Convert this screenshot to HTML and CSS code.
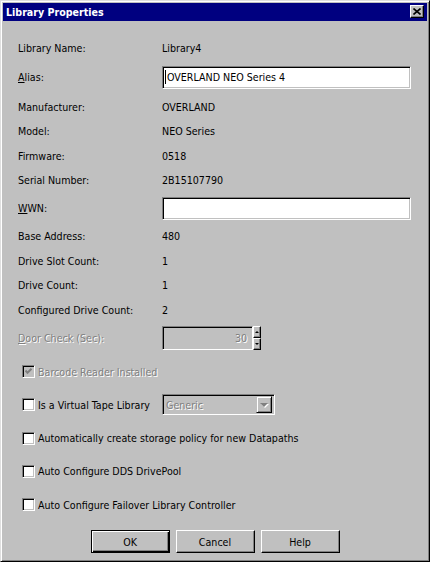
FILE: index.html
```html
<!DOCTYPE html>
<html lang="en">
<head>
    <meta charset="UTF-8">
    <title>Library Properties</title>
    <link rel="stylesheet" href="styles.css">
</head>
<body>
    <div class="window">
        <div class="titlebar">
            <span class="title">Library Properties</span>
            <button class="close" title="Close">
                <svg width="8" height="7" viewBox="0 0 8 7">
                    <path d="M0.5 0.5 L7.5 6.5 M7.5 0.5 L0.5 6.5" stroke="#000" stroke-width="1.6" fill="none"/>
                </svg>
            </button>
        </div>

        <div class="content">
            <div class="form">
                <div class="row">
                    <span class="label">Library Name:</span>
                    <span class="value">Library4</span>
                </div>
                <div class="row row-alias">
                    <span class="label"><u>A</u>lias:</span>
                    <div class="edit"><span class="caret"></span>OVERLAND NEO Series 4</div>
                </div>
                <div class="row">
                    <span class="label">Manufacturer:</span>
                    <span class="value">OVERLAND</span>
                </div>
                <div class="row">
                    <span class="label">Model:</span>
                    <span class="value">NEO Series</span>
                </div>
                <div class="row">
                    <span class="label">Firmware:</span>
                    <span class="value">0518</span>
                </div>
                <div class="row">
                    <span class="label">Serial Number:</span>
                    <span class="value">2B15107790</span>
                </div>
                <div class="row row-wwn">
                    <span class="label"><u>W</u>WN:</span>
                    <div class="edit"></div>
                </div>
                <div class="row">
                    <span class="label">Base Address:</span>
                    <span class="value">480</span>
                </div>
                <div class="row">
                    <span class="label">Drive Slot Count:</span>
                    <span class="value">1</span>
                </div>
                <div class="row">
                    <span class="label">Drive Count:</span>
                    <span class="value">1</span>
                </div>
                <div class="row">
                    <span class="label">Configured Drive Count:</span>
                    <span class="value">2</span>
                </div>
                <div class="row row-tall">
                    <span class="label disabled"><u>D</u>oor Check (Sec):</span>
                    <div class="edit edit-spin disabled">30</div>
                    <div class="spin">
                        <span class="spin-btn"><span class="arrow-up"></span></span>
                        <span class="spin-btn"><span class="arrow-down"></span></span>
                    </div>
                </div>

                <div class="row row-tall check-row">
                    <span class="check disabled">
                        <svg width="7" height="7" viewBox="0 0 7 7">
                            <path d="M0.5 2.5 L2.5 4.8 L6.5 0.8" stroke="#808080" stroke-width="2" fill="none"/>
                        </svg>
                    </span>
                    <span class="check-text disabled">Barcode Reader Installed</span>
                </div>
                <div class="row row-tall check-row">
                    <span class="check-label">
                        <span class="check"></span>
                        <span class="check-text">Is a Virtual Tape Library</span>
                    </span>
                    <div class="combo disabled">
                        <span class="combo-text">Generic</span>
                        <span class="combo-btn"><span class="arrow-down big"></span></span>
                    </div>
                </div>
                <div class="row row-tall check-row">
                    <span class="check"></span>
                    <span class="check-text">Automatically create storage policy for new Datapaths</span>
                </div>
                <div class="row row-tall check-row">
                    <span class="check"></span>
                    <span class="check-text">Auto Configure DDS DrivePool</span>
                </div>
                <div class="row row-tall check-row">
                    <span class="check"></span>
                    <span class="check-text">Auto Configure Failover Library Controller</span>
                </div>
            </div>

            <div class="buttons">
                <button class="btn default">OK</button>
                <button class="btn">Cancel</button>
                <button class="btn">Help</button>
            </div>
        </div>
    </div>
</body>
</html>
```

FILE: styles.css
```css
/* Reset */
body, div, span, button {
    margin: 0;
    padding: 0;
}

body {
    background-color: #c0c0c0;
    font-family: "DejaVu Sans Condensed", "DejaVu Sans", "Liberation Sans", sans-serif;
    font-stretch: condensed;
    font-size: 10.6px;
    color: #000;
}

/* Window frame */
.window {
    width: 430px;
    height: 562px;
    box-sizing: border-box;
    border: 1px solid;
    border-color: #dfdfdf #000 #000 #dfdfdf;
    box-shadow: inset 1px 1px #fff, inset -1px -1px #808080;
    padding: 2px;
    display: flex;
    flex-direction: column;
}

/* Caption */
.titlebar {
    height: 18px;
    flex: none;
    background-color: #000080;
    display: flex;
    justify-content: space-between;
    align-items: center;
    padding: 0 3px 0 3px;
}

.title {
    color: #fff;
    font-weight: bold;
}

.close {
    width: 14px;
    height: 13px;
    align-self: flex-start;
    margin-top: 2px;
    background-color: #c0c0c0;
    border: 1px solid;
    border-color: #fff #000 #000 #fff;
    box-shadow: inset -1px -1px #808080;
    display: flex;
    align-items: center;
    justify-content: center;
}

/* Dialog body */
.content {
    flex: 1;
    display: flex;
    flex-direction: column;
    padding-top: 14.75px;
}

.form {
    padding-left: 15px;
}

.row {
    display: flex;
    align-items: center;
    height: 24.5px;
}

.row-alias {
    height: 34px;
}

.row-wwn {
    height: 31.5px;
}

.row-tall {
    height: 33.25px;
}

.label {
    width: 144px;
    flex: none;
}

.disabled {
    color: #808080;
    text-shadow: 1px 1px 0 #fff;
}

/* Edit boxes */
.edit {
    width: 249px;
    height: 23px;
    box-sizing: border-box;
    background-color: #fff;
    border: 1px solid;
    border-color: #808080 #fff #fff #808080;
    box-shadow: inset 1px 1px #000, inset -1px -1px #c0c0c0;
    padding: 0 3px 0 2px;
    display: flex;
    align-items: center;
    white-space: nowrap;
}

.caret {
    display: inline-block;
    width: 1px;
    height: 14px;
    background-color: #000;
    margin-right: 1px;
}

.edit-spin {
    width: 91px;
    height: 24px;
    background-color: #c0c0c0;
    justify-content: flex-end;
    padding-right: 5px;
}

/* Spinner */
.spin {
    display: flex;
    flex-direction: column;
    width: 8px;
    height: 24px;
}

.spin-btn {
    flex: 1;
    box-sizing: border-box;
    background-color: #c0c0c0;
    border: 1px solid;
    border-color: #fff #000 #000 #fff;
    box-shadow: inset -1px -1px #808080;
    display: flex;
    align-items: center;
    justify-content: center;
}

.arrow-up, .arrow-down {
    width: 0;
    height: 0;
    border-left: 2px solid transparent;
    border-right: 2px solid transparent;
}

.arrow-up {
    border-bottom: 2px solid #000;
}

.arrow-down {
    border-top: 2px solid #000;
}

.arrow-down.big {
    border-left-width: 4px;
    border-right-width: 4px;
    border-top: 4px solid #808080;
    filter: drop-shadow(1px 1px 0 #fff);
}

/* Checkboxes */
.check-row {
    padding-left: 4px;
}

.check-label {
    width: 140px;
    flex: none;
    display: flex;
    align-items: center;
}

.check {
    width: 13px;
    height: 13px;
    flex: none;
    box-sizing: border-box;
    background-color: #fff;
    border: 1px solid;
    border-color: #808080 #fff #fff #808080;
    box-shadow: inset 1px 1px #000, inset -1px -1px #c0c0c0;
    display: flex;
    align-items: center;
    justify-content: center;
}

.check.disabled {
    background-color: #c0c0c0;
}

.check-text {
    margin-left: 3px;
    white-space: nowrap;
}

/* Combo box */
.combo {
    width: 113px;
    height: 21px;
    box-sizing: border-box;
    background-color: #c0c0c0;
    border: 1px solid;
    border-color: #808080 #fff #fff #808080;
    box-shadow: inset 1px 1px #000, inset -1px -1px #c0c0c0;
    padding: 2px;
    display: flex;
    align-items: center;
}

.combo-text {
    flex: 1;
    padding-left: 1px;
}

.combo-btn {
    width: 16px;
    height: 17px;
    box-sizing: border-box;
    background-color: #c0c0c0;
    border: 1px solid;
    border-color: #c0c0c0 #000 #000 #c0c0c0;
    box-shadow: inset 1px 1px #fff, inset -1px -1px #808080;
    display: flex;
    align-items: center;
    justify-content: center;
}

/* Buttons */
.buttons {
    display: flex;
    justify-content: center;
    gap: 6px;
    margin-top: 8.75px;
}

.btn {
    width: 79px;
    height: 23px;
    box-sizing: border-box;
    background-color: #c0c0c0;
    font: inherit;
    color: #000;
    border: 1px solid;
    border-color: #fff #000 #000 #fff;
    box-shadow: inset -1px -1px #808080;
}

.btn.default {
    border-color: #000;
    box-shadow: inset 1px 1px #fff, inset -1px -1px #000, inset -2px -2px #808080;
}
```
